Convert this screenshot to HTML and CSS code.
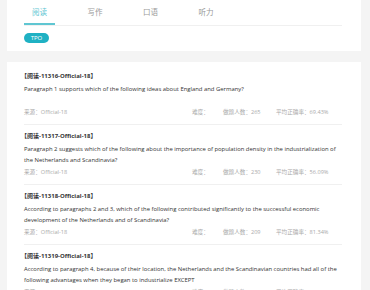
FILE: index.html
```html
<!DOCTYPE html>
<html>

<head>
    <title>TPO 阅读</title>
    <link rel="stylesheet" href="styles.css">
</head>

<body>
    <div class="top-card">
        <div class="tabs">
            <div class="tab active">阅读</div>
            <div class="tab">写作</div>
            <div class="tab">口语</div>
            <div class="tab">听力</div>
        </div>
        <div class="filters">
            <span class="pill">TPO</span>
        </div>
    </div>

    <div class="list-card">
        <div class="item">
            <div class="item-title">【阅读-11316-Official-18】</div>
            <div class="item-question">Paragraph 1 supports which of the following ideas about England and Germany?</div>
            <div class="item-meta">
                <span class="source">来源：Official-18</span>
                <span class="level">难度：</span>
                <span class="count">做题人数：265</span>
                <span class="rate">平均正确率：69.43%</span>
            </div>
        </div>
        <div class="item">
            <div class="item-title">【阅读-11317-Official-18】</div>
            <div class="item-question">Paragraph 2 suggests which of the following about the importance of population density in the industrialization of the Netherlands and Scandinavia?</div>
            <div class="item-meta">
                <span class="source">来源：Official-18</span>
                <span class="level">难度：</span>
                <span class="count">做题人数：230</span>
                <span class="rate">平均正确率：56.09%</span>
            </div>
        </div>
        <div class="item">
            <div class="item-title">【阅读-11318-Official-18】</div>
            <div class="item-question">According to paragraphs 2 and 3, which of the following contributed significantly to the successful economic development of the Netherlands and of Scandinavia?</div>
            <div class="item-meta">
                <span class="source">来源：Official-18</span>
                <span class="level">难度：</span>
                <span class="count">做题人数：209</span>
                <span class="rate">平均正确率：81.34%</span>
            </div>
        </div>
        <div class="item">
            <div class="item-title">【阅读-11319-Official-18】</div>
            <div class="item-question">According to paragraph 4, because of their location, the Netherlands and the Scandinavian countries had all of the following advantages when they began to industrialize EXCEPT</div>
            <div class="item-meta">
                <span class="source">来源：Official-18</span>
                <span class="level">难度：</span>
                <span class="count">做题人数：198</span>
                <span class="rate">平均正确率：72.10%</span>
            </div>
        </div>
    </div>
</body>

</html>
```

FILE: styles.css
```css
body {
    margin: 0 9px 0 7px;
    background: #f4f4f4;
    font-family: "Open Sans", "Noto Sans CJK SC", sans-serif;
    color: #333;
}

.top-card {
    background: #fff;
    padding: 0 19px 0 17px;
    height: 51px;
}

.tabs {
    display: flex;
    border-bottom: 1px solid #f0f0f0;
    height: 25px;
}

.tab {
    width: 31px;
    margin-right: 24.5px;
    padding-top: 3px;
    height: 20px;
    text-align: center;
    font-size: 7.5px;
    line-height: 18px;
    color: #999;
}

.tab.active {
    color: #5fc6d2;
    border-bottom: 2px solid #5fc6d2;
}

.filters {
    display: flex;
    padding-top: 7px;
}

.pill {
    width: 25px;
    height: 10px;
    line-height: 10px;
    border-radius: 5px;
    background: #1fb1c3;
    color: #fff;
    font-size: 6px;
    text-align: center;
}

.list-card {
    background: #fff;
    margin-top: 11px;
    padding: 3px 19px 0 17px;
}

.item {
    padding: 6px 0 7px;
    border-bottom: 1px solid #f0f0f0;
}

.item-title {
    font-size: 6px;
    font-weight: bold;
    line-height: 10px;
    margin-left: -3px;
}

.item-question {
    margin-top: 3px;
    font-size: 5.9px;
    line-height: 10.5px;
    min-height: 21px;
}

.item-meta {
    display: flex;
    margin-top: 2px;
    font-size: 5.6px;
    line-height: 10px;
    color: #aaa;
}

.source {
    flex: 1;
}

.level {
    width: 31px;
}

.count {
    width: 53px;
}

.rate {
    width: 66px;
}
```
